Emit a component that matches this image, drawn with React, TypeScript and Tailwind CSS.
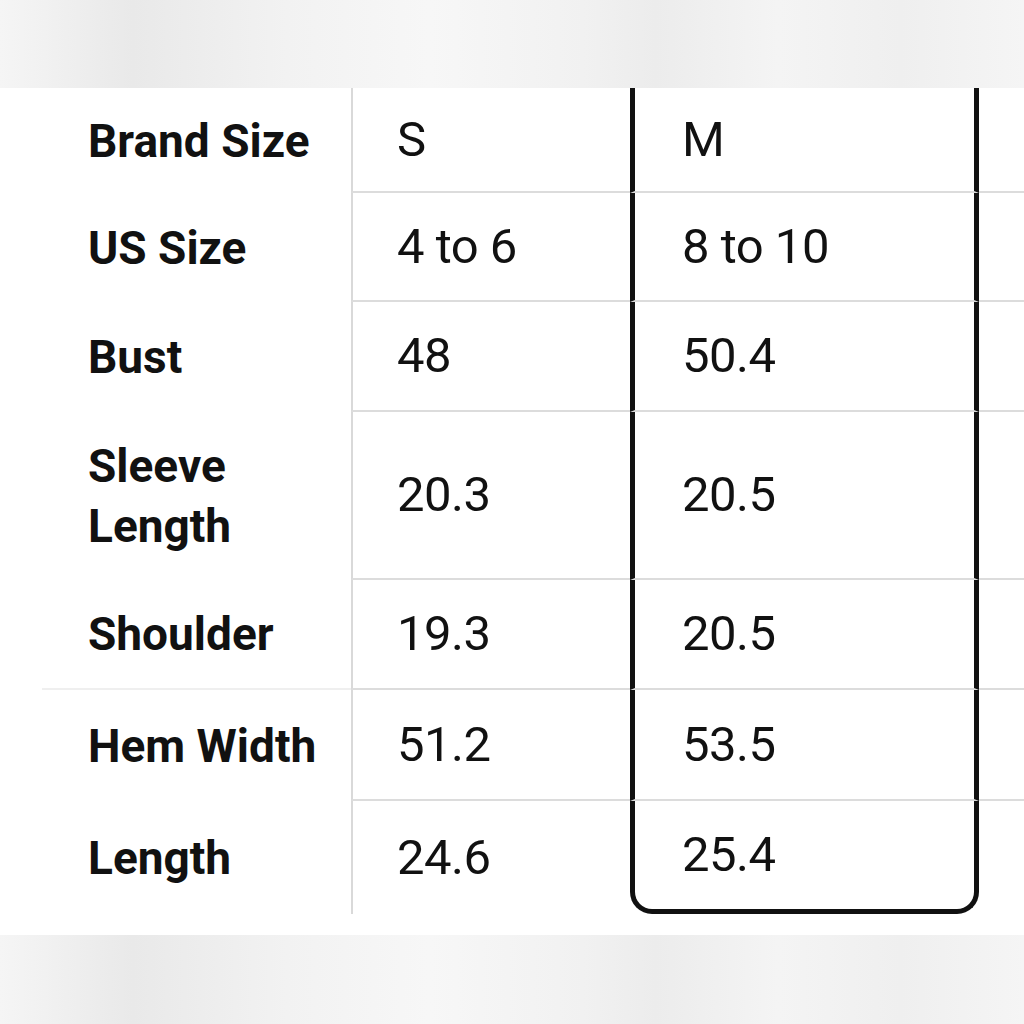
import React from "react";

type Row = {
  label: string[];
  s: string;
  m: string;
  h: string;
};

const rows: Row[] = [
  { label: ["Brand Size"], s: "S", m: "M", h: "h-[105px]" },
  { label: ["US Size"], s: "4 to 6", m: "8 to 10", h: "h-[109px]" },
  { label: ["Bust"], s: "48", m: "50.4", h: "h-[110px]" },
  { label: ["Sleeve", "Length"], s: "20.3", m: "20.5", h: "h-[168px]" },
  { label: ["Shoulder"], s: "19.3", m: "20.5", h: "h-[110px]" },
  { label: ["Hem Width"], s: "51.2", m: "53.5", h: "h-[111px]" },
  { label: ["Length"], s: "24.6", m: "25.4", h: "h-[113px]" },
];

const band =
  "bg-[linear-gradient(90deg,#f5f5f5_0%,#e9e9e9_13%,#f2f2f2_28%,#f7f7f7_42%,#f1f1f1_57%,#ececec_64%,#f4f4f4_76%,#efefef_88%,#f5f5f5_100%)]";

export default function App() {
  return (
    <div
      className="w-[1024px] h-[1024px] flex flex-col bg-white text-[#111]"
      style={{ fontFamily: "Roboto, 'Liberation Sans', sans-serif" }}
    >
      <div className={`h-[88px] ${band}`} />

      <div className="h-[847px] bg-white flex flex-col">
        {rows.map((r, i) => {
          const last = i === rows.length - 1;
          return (
            <div
              key={r.label.join(" ")}
              className={`grid grid-cols-[351px_279px_349px_45px] ${r.h}`}
            >
              {/* label */}
              <div
                className={`ml-[42px] flex flex-col justify-center pl-[46px] text-[46px] font-bold leading-[60px] ${
                  i === 4 ? "border-b-2 border-[#efefef]" : ""
                }`}
              >
                {r.label.map((l) => (
                  <span key={l}>{l}</span>
                ))}
              </div>

              {/* S */}
              <div
                className={`flex items-center pl-[44px] border-l-2 border-l-[#d9d9d9] text-[49px] tracking-[-0.5px] ${
                  last ? "" : "border-b-2 border-b-[#dcdcdc]"
                }`}
              >
                {r.s}
              </div>

              {/* M (highlighted) */}
              <div
                className={`flex items-center pl-[47px] border-x-[5px] border-x-[#111] text-[49px] tracking-[-0.5px] ${
                  last
                    ? "border-b-[5px] border-b-[#111] rounded-b-[22px]"
                    : "border-b-2 border-b-[#dcdcdc]"
                }`}
              >
                {r.m}
              </div>

              {/* cut-off column */}
              <div className={last ? "" : "border-b-2 border-b-[#dcdcdc]"} />
            </div>
          );
        })}
      </div>

      <div className={`flex-1 ${band}`} />
    </div>
  );
}
